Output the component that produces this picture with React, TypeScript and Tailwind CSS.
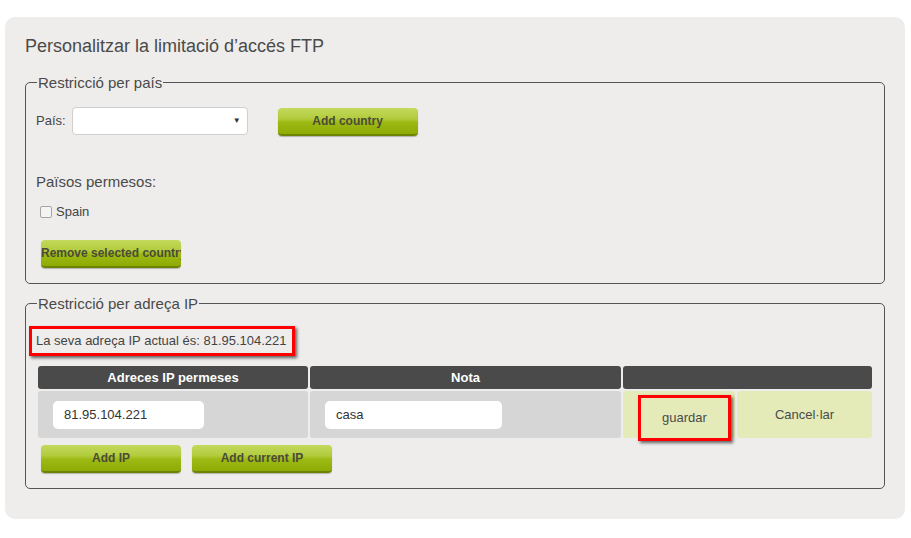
import React from "react";

const font = "font-['Liberation_Sans',Arial,sans-serif]";

function GreenButton({ label, clip = false }: { label: string; clip?: boolean }) {
  return (
    <button
      className={`w-[140px] h-[28px] rounded-[4px] border-b-2 border-[#6b8500] bg-[linear-gradient(to_bottom,#c3d95c_0%,#b2cc3e_40%,#9dba14_55%,#8dab04_100%)] shadow-[0_1px_1px_rgba(0,0,0,0.25)] text-[12px] font-bold text-[#4b4b37] whitespace-nowrap overflow-hidden flex items-center ${
        clip ? "justify-start" : "justify-center"
      }`}
    >
      {label}
    </button>
  );
}

function App() {
  return (
    <div className={`${font} bg-white w-[911px] h-[538px] pt-[17px] pl-[5px]`}>
      <div className="w-[900px] h-[502px] bg-[#eeedeb] rounded-[10px] pt-[19px] px-[20px]">
        <h2 className="text-[18px] leading-[21px] text-[#4a4a4a] mb-[17px]">
          Personalitzar la limitació d’accés FTP
        </h2>

        {/* per pais */}
        <fieldset className="border border-[#555] rounded-[5px] px-[10px] pt-[15px] pb-[15px]">
          <legend className="ml-[1px] px-[1px] text-[15px] leading-[17px] text-[#4a4a4a]">
            Restricció per país
          </legend>
          <div className="flex items-center">
            <span className="text-[13px] text-[#444]">País:</span>
            <div className="ml-[6px] w-[176px] h-[28px] bg-white border border-[#cfcfcf] rounded-[4px] flex items-center justify-end pr-[6px]">
              <span className="text-[8px] text-[#333]">▼</span>
            </div>
            <div className="ml-[30px] mt-[2px]">
              <GreenButton label="Add country" />
            </div>
          </div>

          <p className="mt-[37px] text-[15px] leading-[17px] text-[#4a4a4a]">Països permesos:</p>
          <div className="mt-[14px] flex items-center h-[16px] pl-[4px]">
            <span className="w-[12px] h-[12px] border border-[#a5a5a5] rounded-[2px] bg-[#f4f4f4]"></span>
            <span className="ml-[4px] text-[13px] text-[#444]">Spain</span>
          </div>
          <div className="mt-[20px] pl-[5px]">
            <GreenButton label="Remove selected country" clip />
          </div>
        </fieldset>

        {/* per IP */}
        <fieldset className="mt-[11px] border border-[#555] rounded-[5px] px-[10px] pt-[14px] pb-[15px]">
          <legend className="ml-[1px] px-[1px] text-[15px] leading-[17px] text-[#4a4a4a]">
            Restricció per adreça IP
          </legend>
          <div className="ml-[-7px] inline-block border-[3px] border-[#f00] pl-[4px] pr-[5px] text-[13px] leading-[24px] text-[#444] shadow-[2px_2px_3px_rgba(0,0,0,0.6)]">
            La seva adreça IP actual és: 81.95.104.221
          </div>

          <div className="mt-[10px] ml-[2px] grid grid-cols-[270px_311px_112px_135px] gap-x-[2px] gap-y-[2px]">
            <div className="h-[23px] bg-[#4a4a4a] rounded-[3px] text-white text-[13px] font-bold flex items-center justify-center">
              Adreces IP permeses
            </div>
            <div className="h-[23px] bg-[#4a4a4a] rounded-[3px] text-white text-[13px] font-bold flex items-center justify-center">
              Nota
            </div>
            <div className="col-span-2 h-[23px] bg-[#4a4a4a] rounded-[3px]"></div>

            <div className="h-[47px] bg-[#d6d6d6] rounded-[3px] flex items-center pl-[15px]">
              <div className="w-[151px] h-[28px] bg-white rounded-[5px] pl-[11px] flex items-center text-[13px] text-[#333]">
                81.95.104.221
              </div>
            </div>
            <div className="h-[47px] bg-[#d6d6d6] rounded-[3px] flex items-center pl-[15px]">
              <div className="w-[177px] h-[28px] bg-white rounded-[5px] pl-[11px] flex items-center text-[13px] text-[#333]">
                casa
              </div>
            </div>
            <div className="h-[47px] bg-[#e4ebb9] rounded-[3px] pl-[15px] pt-[4px]">
              <div className="w-[93px] h-[46px] border-[3px] border-[#f00] shadow-[2px_2px_3px_rgba(0,0,0,0.6)] flex items-center justify-center text-[13px] text-[#4a4a4a]">
                guardar
              </div>
            </div>
            <div className="h-[47px] bg-[#e4ebb9] rounded-[3px] flex items-center justify-center text-[13px] text-[#4a4a4a]">
              Cancel·lar
            </div>
          </div>

          <div className="mt-[7px] pl-[5px] flex gap-[11px]">
            <GreenButton label="Add IP" />
            <GreenButton label="Add current IP" />
          </div>
        </fieldset>
      </div>
    </div>
  );
}

export default App;
